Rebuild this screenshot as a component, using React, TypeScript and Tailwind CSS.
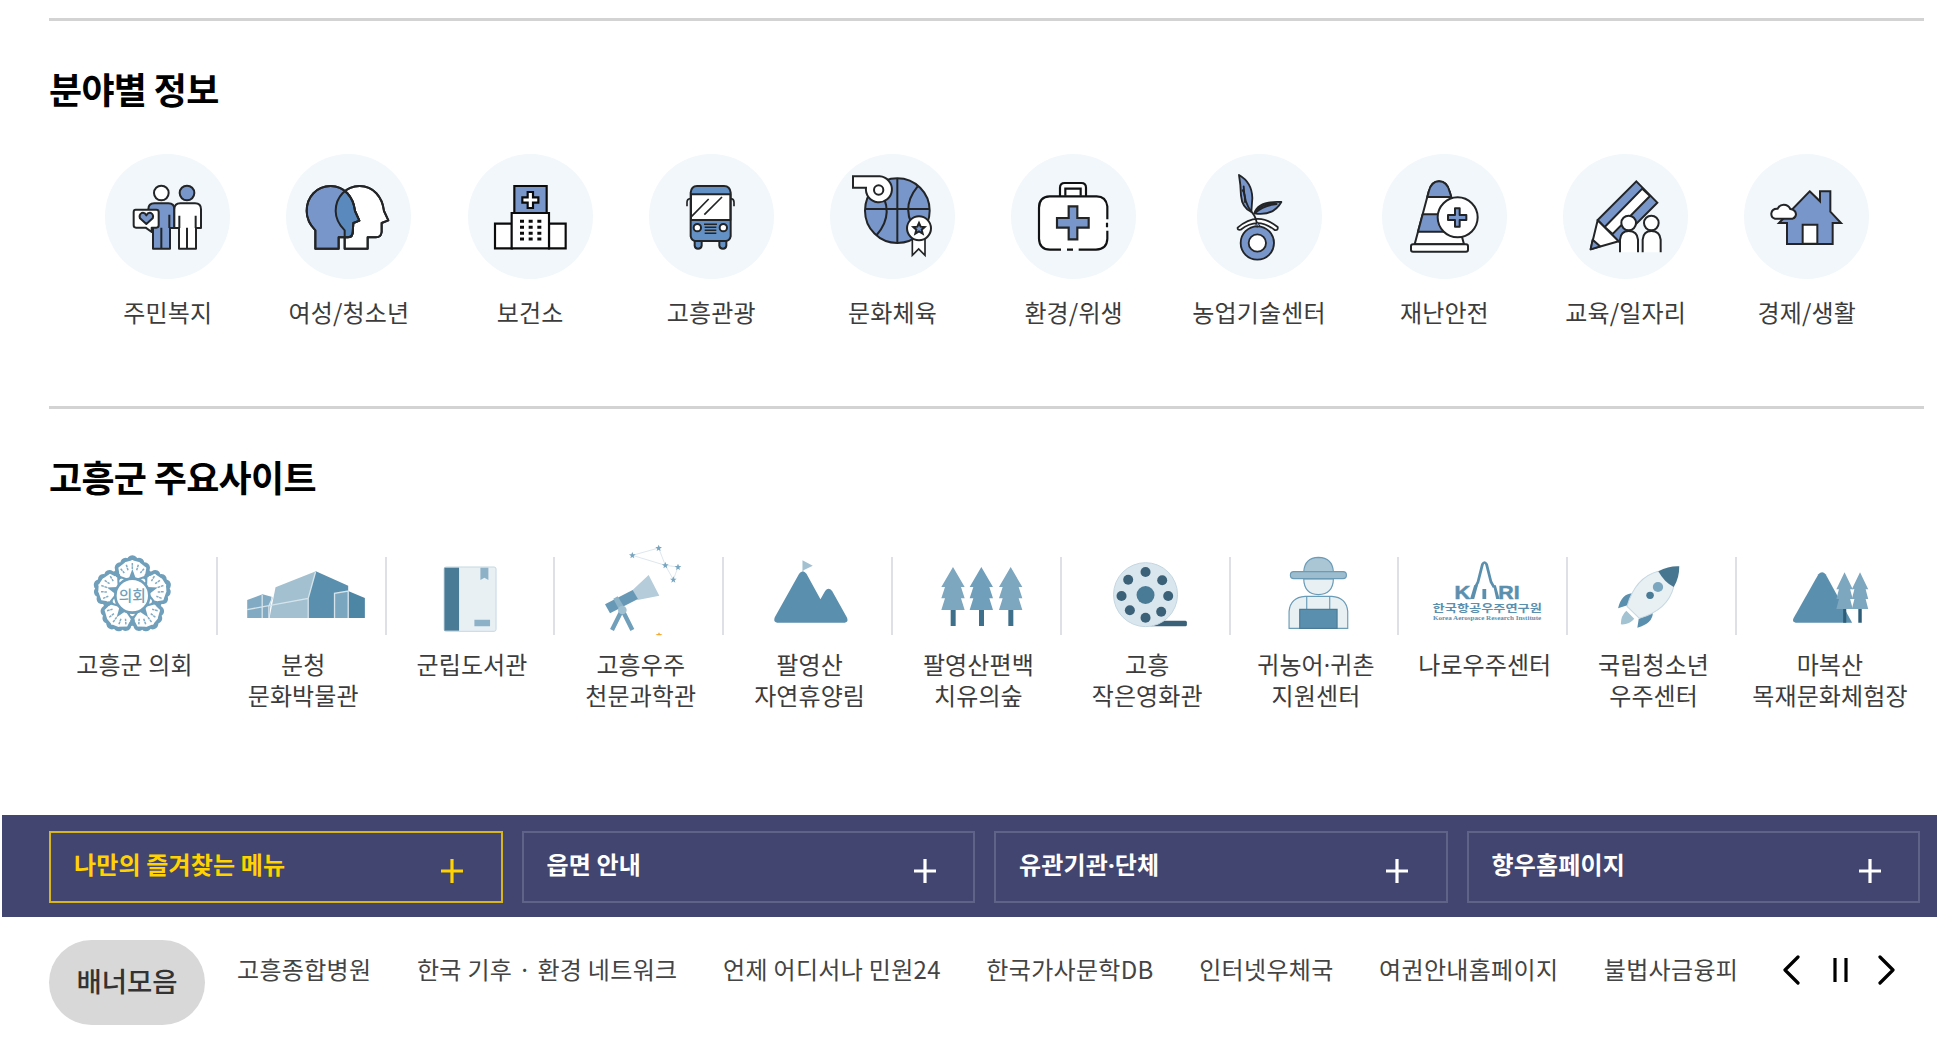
import React from "react";

const BLUE = "#7896ca";
const INK = "#222426";
const TEAL = "#5b8fae";

type Item = {
  label: string;
  viewBox: string;
  icon: React.ReactNode;
};

const headLeft =
  "M948 745V690C930 672 922 652 922 632C922 590 952 557 994 557C1035 557 1062 590 1067 632L1080 661L1062 668L1060 698Q1058 711 1045 711H1018V745Z";
const headRight =
  "M1036 745V690C1016 670 1009 652 1009 632C1009 590 1040 557 1081 557C1122 557 1149 590 1154 632L1167 660L1147 668V695Q1145 711 1130 711H1105V745Z";

const fields: Item[] = [
  {
    label: "주민복지",
    viewBox: "316 461 375 375",
    icon: (
      <g stroke={INK} strokeWidth="6" strokeLinejoin="round">
        <circle cx="485" cy="578" r="22" fill="#fff" />
        <circle cx="562" cy="578" r="22" fill={BLUE} />
        <path d="M446 660V627Q446 609 464 609H506Q524 609 524 627V683H511V745H460V683H446Z" fill={BLUE} />
        <path d="M524 683V627Q524 609 542 609H586Q604 609 604 627V683H589V745H538V683Z" fill="#fff" />
        <path d="M485 682V745M509 643V683M539 646V683M588 646V683M562 682V745" fill="none" />
        <path d="M408 628H470Q477 628 477 635V675Q477 682 470 682H456V695L438 682H409Q402 682 402 675V635Q402 628 408 628Z" fill="#fff" />
        <path d="M440 671L421 654Q417 643 426 638Q435 635 440 645Q445 635 454 638Q463 643 459 654Z" fill={BLUE} />
      </g>
    ),
  },
  {
    label: "여성/청소년",
    viewBox: "860 461 375 375",
    icon: (
      <g stroke={INK} strokeWidth="6" strokeLinejoin="round">
        <clipPath id="head-overlap">
          <path d={headRight} />
        </clipPath>
        <path d={headRight} fill="#fff" />
        <path d={headLeft} fill={BLUE} />
        <path d={headLeft} fill="#5989bd" clipPath="url(#head-overlap)" />
        <path d={headLeft} fill="none" />
        <path d={headRight} fill="none" />
      </g>
    ),
  },
  {
    label: "보건소",
    viewBox: "54 71 375 375",
    icon: (
      <g stroke="#0b0b0c" strokeWidth="6.5">
        <path d="M193 167H290V250H193Z" fill={BLUE} />
        <path d="M135 280H186V354H135ZM297 280H347V354H297Z" fill="#fff" />
        <path d="M185 248H297V354H185Z" fill="#fff" />
        <path d="M233 185H249V201H265V217H249V233H233V217H217V201H233Z" fill="#fff" />
        <path d="M210 273H274M210 291H274M210 309H274M210 326H274" strokeWidth="9" strokeDasharray="12 14" />
      </g>
    ),
  },
  {
    label: "고흥관광",
    viewBox: "598 71 375 375",
    icon: (
      <g stroke={INK} strokeWidth="6" strokeLinejoin="round">
        <path d="M735 330V346Q736 355 745 355Q755 355 756 346V330ZM809 330V346Q810 355 820 355Q829 355 830 346V330Z" fill="#6491c5" />
        <path d="M723 187Q725 167 742 167H823Q841 167 843 187V318Q840 332 828 332H738Q726 332 723 318Z" fill="#6491c5" />
        <path d="M724 192H842V269H724Z" fill="#fff" />
        <path d="M722 205Q712 206 712 216V228M844 205Q853 206 853 216V228M726 258L777 206M764 253L817 200" fill="none" strokeWidth="5" />
        <circle cx="743" cy="292" r="11" fill="#fff" />
        <circle cx="821" cy="292" r="11" fill="#fff" />
        <path d="M763 282H802M765 291H800M765 300H800M765 309H800" strokeWidth="4.5" />
      </g>
    ),
  },
  {
    label: "문화체육",
    viewBox: "1141 71 375 375",
    icon: (
      <g stroke={INK} strokeWidth="6">
        <circle cx="1343" cy="241" r="97" fill={BLUE} />
        <path d="M1343 144V338M1246 236H1440M1404 168Q1345 240 1408 312M1283 168Q1340 246 1281 314" fill="none" />
        <path d="M1210 138H1290A39 39 0 1 1 1249 172H1210Z" fill="#fff" />
        <circle cx="1287" cy="179" r="14" fill="#fff" />
        <path d="M1388 325V375L1407 356L1426 375V325Z" fill="#fff" strokeWidth="5" />
        <circle cx="1408" cy="294" r="36" fill="#fff" />
        <path d="M1408 278L1413 289L1425 290L1416 298L1419 310L1408 303L1397 310L1400 298L1391 290L1403 289Z" fill={BLUE} />
      </g>
    ),
  },
  {
    label: "환경/위생",
    viewBox: "155 71 375 375",
    icon: (
      <g stroke="#111213" strokeWidth="6.5" fill="#fff">
        <rect x="239" y="198" width="205" height="160" rx="34" stroke="none" />
        <path d="M302 197V172Q302 158 316 158H366Q380 158 380 172V197" />
        <path d="M318 196V175H364V196" />
        <path d="M444 267V228Q440 198 412 198H271Q239 200 239 232V325Q240 357 272 358H305M323 358H341M358 358H410Q443 356 444 325V301M443 277V291" fill="none" />
        <path d="M328 228H354V263H388V292H354V327H328V292H293V263H328Z" fill={BLUE} stroke={INK} />
      </g>
    ),
  },
  {
    label: "농업기술센터",
    viewBox: "711 71 375 375",
    icon: (
      <g stroke={INK} strokeWidth="5.5" strokeLinejoin="round" strokeLinecap="round">
        <path d="M833 292Q892 240 953 290Q955 301 944 299Q893 258 842 298Q832 300 833 292Z" fill="#fff" />
        <circle cx="892" cy="338" r="50" fill={BLUE} />
        <circle cx="892" cy="338" r="26" fill="#fff" />
        <path d="M874 245Q846 232 843 196Q842 162 837 134Q876 156 877 203Z" fill={BLUE} />
        <path d="M883 249Q894 211 964 215Q940 258 883 249Z" fill={BLUE} />
        <path d="M851 168Q852 220 876 246Q890 262 892 289M885 248Q910 225 950 221" fill="none" />
        <path d="M848 180Q856 190 855 215M890 240Q912 219 945 219" fill="none" />
        <path d="M886 285L893 276L899 286" fill={BLUE} strokeWidth="3" />
      </g>
    ),
  },
  {
    label: "재난안전",
    viewBox: "-112 71 375 375",
    icon: (
      <g stroke={INK} strokeWidth="6" strokeLinejoin="round">
        <path d="M-14 342L28 184Q36 153 59 153Q83 153 91 184L134 342Z" fill="#fff" />
        <path d="M24 200L28 184Q36 153 59 153Q83 153 91 184L96 200ZM10 252H108L122 304H-4Z" fill={BLUE} />
        <rect x="-25" y="342" width="171" height="22" rx="6" fill="#fff" />
        <circle cx="115" cy="261" r="60" fill="#fff" />
        <path d="M107 234H121V254H141V269H121V289H107V269H86V254H107Z" fill={BLUE} />
      </g>
    ),
  },
  {
    label: "교육/일자리",
    viewBox: "431 71 375 375",
    icon: (
      <g stroke={INK} strokeWidth="6">
        <path d="M651 153L714 217L598 333L535 269Z" fill={BLUE} />
        <path d="M669 175L692 197L580 311L556 290Z" fill="#fff" />
        <path d="M535 270L598 333L514 357Z" fill="#fff" strokeLinejoin="round" />
        <path d="M520 328L542 348L514 357Z" fill={BLUE} strokeLinejoin="round" />
        <path d="M602 366V328Q604 302 628 302Q654 302 656 328V366ZM670 366V328Q672 302 696 302Q722 302 724 328V366Z" fill="#fff" stroke="none" />
        <path d="M602 366V328Q604 302 628 302Q654 302 656 328V366M670 366V328Q672 302 696 302Q722 302 724 328V366" fill="none" />
        <circle cx="628" cy="278" r="22" fill="#fff" />
        <circle cx="696" cy="278" r="22" fill="#fff" />
      </g>
    ),
  },
  {
    label: "경제/생활",
    viewBox: "975 71 375 375",
    icon: (
      <g stroke={INK} strokeWidth="6">
        <path d="M1172 183L1203 213V183H1234V244L1266 278H1241V341H1104V278H1080Z" fill={BLUE} />
        <path d="M1151 283H1195V340H1151Z" fill="#fff" />
        <path d="M1068 265Q1056 262 1057 249Q1059 234 1076 235Q1082 223 1094 223Q1108 223 1114 236Q1130 238 1131 252Q1130 262 1121 265Z" fill="#fff" />
      </g>
    ),
  },
];

const tree = "M0 0L35 60H24L35 94H24L35 129H-35L-24 94H-35L-24 60H-35Z";

const sites: Item[] = [
  {
    label: "고흥군 의회",
    viewBox: "150 450 506.4 300",
    icon: (
      <g transform="translate(397 617)">
        {[0, 72, 144, 216, 288].map(deg => (
          <g key={deg} transform={`rotate(${deg})`}>
            <g fill="#fff" stroke="#6f9fba" strokeWidth="14">
              <path d="M0 -40L-34 -62L-30 -90L0 -100L30 -90L34 -62Z" />
              <circle cx="-37" cy="-67" r="10" />
              <circle cx="37" cy="-67" r="10" />
              <circle cx="-37" cy="-84" r="9" />
              <circle cx="37" cy="-84" r="9" />
              <circle cx="-20" cy="-98" r="9" />
              <circle cx="20" cy="-98" r="9" />
              <circle cx="0" cy="-104" r="10" />
            </g>
            <path d="M0 -46L-38 -60L-42 -84L-20 -101L0 -106L20 -101L42 -84L38 -60Z" fill="#fff" />
            <path
              d="M0 -98V-78M-18 -93L-13 -76M18 -93L13 -76M-35 -81L-24 -68M35 -81L24 -68"
              stroke="#82acc3"
              strokeWidth="4.5"
              strokeDasharray="8 2"
            />
            <path d="M-11 -50L0 -80L11 -50Z" fill="#6f9fba" />
          </g>
        ))}
        <circle r="51" fill="#fff" stroke="#6f9fba" strokeWidth="8" />
        <text y="17" textAnchor="middle" fontSize="44" fontWeight="500" fill="#6f9fba">
          의회
        </text>
      </g>
    ),
  },
  {
    label: "분청\n문화박물관",
    viewBox: "656.4 450 506.4 300",
    icon: (
      <g>
        <path d="M741 630L787 613L814 620L806 684H741Z" fill="#82abc3" />
        <path d="M808 684L826 592L947 544L925 684Z" fill="#a2c0d0" />
        <path d="M947 544L1044 587V684H924V625Z" fill={TEAL} />
        <path d="M1003 610L1044 603V684H1003Z" fill="#7ba6bf" />
        <path d="M1044 603L1094 624V684H1044Z" fill="#4d85a5" />
        <path d="M741 659L924 625L946 546M924 625V684M786 615V684M806 684V648L818 622M1003 684V610L1044 603V684" fill="none" stroke="#d5e3eb" strokeWidth="4" />
      </g>
    ),
  },
  {
    label: "군립도서관",
    viewBox: "1162.8 450 506.4 300",
    icon: (
      <g>
        <rect x="1331" y="531" width="156" height="193" rx="6" fill="#e8f0f4" stroke="#c5d8e2" strokeWidth="3" />
        <path d="M1332 533H1376V722H1332Z" fill="#4a7b96" />
        <path d="M1440 533H1464V570L1452 563L1440 570ZM1422 689H1469V709H1422Z" fill="#8db2c8" />
      </g>
    ),
  },
  {
    label: "고흥우주\n천문과학관",
    viewBox: "169 30 506.4 300",
    icon: (
      <g>
        <path d="M398 76L477 54L497 106ZM497 106L535 111L521 149Z" fill="none" stroke="#d5e2ea" strokeWidth="2.5" />
        {["398 76", "477 54", "497 106", "535 111", "521 149"].map(pos => (
          <path
            key={pos}
            transform={`translate(${pos})`}
            d="M0 -10L3 -3L10 -3L4 2L6 9L0 5L-6 9L-4 2L-10 -3L-3 -3Z"
            fill="#78a5bf"
          />
        ))}
        <path d="M398 181L447 135L479 197L414 210Z" fill="#b5ccda" />
        <path d="M316 223L399 180L415 207L331 250Z" fill="#6799b6" />
        <path d="M341 206L354 199L372 229L357 237Z" fill="#8cb3c8" />
        <path d="M364 246L337 300M371 246L398 300" stroke="#6f9fba" strokeWidth="13" />
        <circle cx="368" cy="240" r="13" fill="#9fc0d1" />
        <path d="M478 307L481 312L488 313L484 316H472L468 313L475 312Z" fill="#f7a92f" />
      </g>
    ),
  },
  {
    label: "팔영산\n자연휴양림",
    viewBox: "675.6 30 506.4 300",
    icon: (
      <g>
        <path d="M908 91L939 107L911 121V130H908Z" fill="#a3c0d1" />
        <path d="M898 131Q909 118 920 131L962 208L976 183Q986 170 997 183L1041 262Q1048 276 1035 278H832Q819 276 825 262Z" fill={TEAL} />
      </g>
    ),
  },
  {
    label: "팔영산편백\n치유의숲",
    viewBox: "-198 30 506.4 300",
    icon: (
      <g>
        {[-21, 64, 152].map((x, i) => (
          <g key={x} transform={`translate(${x} 111)`}>
            <path d="M-7 125H8V177H-7Z" fill="#3f708b" />
            <path d={tree} fill={i === 1 ? "#6f9fba" : "#7da6bf"} />
          </g>
        ))}
      </g>
    ),
  },
  {
    label: "고흥\n작은영화관",
    viewBox: "308.4 30 506.4 300",
    icon: (
      <g>
        <path d="M570 289L600 272H676Q680 272 680 277V284Q680 289 676 289Z" fill="#3a6177" />
        <circle cx="556" cy="194" r="96" fill="#d9e6ed" stroke="#c3d6e1" strokeWidth="3" />
        <circle cx="556" cy="195" r="27" fill="#4a7b96" />
        <g fill="#3a6177">
          <circle cx="556" cy="126" r="15" />
          <circle cx="606" cy="151" r="15" />
          <circle cx="624" cy="198" r="15" />
          <circle cx="603" cy="245" r="15" />
          <circle cx="556" cy="263" r="15" />
          <circle cx="509" cy="241" r="15" />
          <circle cx="484" cy="198" r="15" />
          <circle cx="504" cy="149" r="15" />
        </g>
      </g>
    ),
  },
  {
    label: "귀농어·귀촌\n지원센터",
    viewBox: "814.8 30 506.4 300",
    icon: (
      <g stroke="#6a9bb7" strokeWidth="3.5">
        <path d="M1030 147Q1031 192 1074 194Q1118 192 1119 147Z" fill="#e8f0f4" />
        <path d="M1030 125Q1033 83 1074 82Q1116 83 1119 125Z" fill="#aac5d4" />
        <rect x="990" y="125" width="168" height="21" rx="10" fill="#9dbccd" />
        <path d="M986 295V244Q990 202 1034 199H1114Q1158 202 1162 244V295Z" fill="#e8f0f4" />
        <path d="M1039 199V238M1108 199V238" />
        <path d="M1018 238H1130V295H1018Z" fill={TEAL} stroke="#4a7b96" />
      </g>
    ),
  },
  {
    label: "나로우주센터",
    viewBox: "1.2 30 491 300",
    icon: (
      <g fill={TEAL}>
        <path d="M220 172L228 156L241 103Q247 92 253 103L266 156L275 172" fill="none" stroke={TEAL} strokeWidth="8" />
        <path d="M205 207L217 166H228L217 207ZM272 166H280L291 207H281ZM241 177H252V207H241Z" />
        <g fontFamily="Liberation Sans" fontWeight="700" fontSize="57" stroke={TEAL} strokeWidth="1.5">
          <text x="160" y="207" textLength="46" lengthAdjust="spacingAndGlyphs">
            K
          </text>
          <text x="287" y="207" textLength="62" lengthAdjust="spacingAndGlyphs">
            RI
          </text>
        </g>
        <text x="96" y="245" fontSize="32" fontWeight="700" textLength="318" lengthAdjust="spacingAndGlyphs">
          한국항공우주연구원
        </text>
        <text x="97" y="269" fontSize="17" fontWeight="700" fontFamily="Liberation Serif" textLength="315" lengthAdjust="spacingAndGlyphs">
          Korea Aerospace Research Institute
        </text>
      </g>
    ),
  },
  {
    label: "국립청소년\n우주센터",
    viewBox: "492.2 30 491 300",
    icon: (
      <g>
        <path d="M659 242Q643 256 643 283Q667 285 682 266Z" fill="#a3c2d2" />
        <path d="M679 190Q645 190 635 235L662 226ZM736 247Q737 280 691 293L695 266Z" fill={TEAL} />
        <path d="M661 229Q685 142 752 124L797 170Q780 240 697 265Z" fill="#e8f0f4" stroke="#c5d8e2" strokeWidth="3" />
        <path d="M752 124Q784 107 813 109Q813 145 797 171Q770 158 752 124Z" fill="#477790" />
        <circle cx="751" cy="171" r="15" fill="#7ba6bf" />
        <circle cx="728" cy="196" r="11" fill="#4a7b96" />
      </g>
    ),
  },
  {
    label: "마복산\n목재문화체험장",
    viewBox: "983.2 30 535 300",
    icon: (
      <g>
        <path d="M1217 133Q1228 120 1238 133L1315 278H1151Q1139 276 1145 264Z" fill={TEAL} />
        <path d="M1289 232H1298V278H1289ZM1333 232H1343V278H1333Z" fill="#2f5d78" />
        <g fill="#7da6bf">
          <path d={tree} transform="translate(1293 127) scale(.68 .85)" />
          <path d={tree} transform="translate(1338 127) scale(.68 .85)" />
        </g>
      </g>
    ),
  },
];

const menus = ["나만의 즐겨찾는 메뉴", "읍면 안내", "유관기관·단체", "향우홈페이지"];

const banners = [
  "고흥종합병원",
  "한국 기후 · 환경 네트워크",
  "언제 어디서나 민원24",
  "한국가사문학DB",
  "인터넷우체국",
  "여권안내홈페이지",
  "불법사금융피",
];

// the CJK middle dot is too wide between two words, so use the latin one
function Label({ text }: { text: string }) {
  const [before, after] = text.split("·");
  if (after === undefined) return <>{text}</>;
  return (
    <>
      {before}
      <span className="font-['Noto_Sans',sans-serif] leading-none">·</span>
      {after}
    </>
  );
}

function FieldInfo() {
  return (
    <section className="mr-[15px] ml-[49px] h-[388px] border-t-[3px] border-[#d3d3d3] pt-[47px]">
      <h2 className="text-[36px] leading-[40px] font-bold tracking-[-0.7px] text-black">분야별 정보</h2>
      <ul className="mt-[46px] flex gap-[56.2px] pl-[56.2px]">
        {fields.map(({ label, viewBox, icon }) => (
          <li key={label} className="flex min-w-[125px] shrink-0 flex-col items-center">
            <span className="size-[125px] rounded-full bg-[#f1f7fa]">
              <svg viewBox={viewBox} className="size-full">
                {icon}
              </svg>
            </span>
            <span className="mt-[17px] text-2xl tracking-[0.15px] whitespace-nowrap text-[#3c3c3c]">{label}</span>
          </li>
        ))}
      </ul>
    </section>
  );
}

function MainSites() {
  return (
    <section className="mr-[15px] ml-[49px] h-[409px] border-t-[3px] border-[#d3d3d3] pt-[47px]">
      <h2 className="text-[36px] leading-[40px] font-bold tracking-[-0.7px] text-black">고흥군 주요사이트</h2>
      <ul className="mt-[44px] flex pl-px">
        {sites.map(({ label, viewBox, icon }, i) => (
          <li key={label} className="w-[168.8px] shrink-0 last:w-[184px]">
            <div className="flex h-[100px] items-end">
              <svg viewBox={viewBox} preserveAspectRatio="none" className="h-full min-w-0 flex-1">
                {icon}
              </svg>
              {i < sites.length - 1 && <span className="mr-px mb-[5px] -ml-[3px] h-[78px] w-[2px] bg-[#dfdfe8]" />}
            </div>
            <p className="mt-[8px] text-center text-2xl leading-[31px] tracking-[0.1px] whitespace-pre text-[#3c3c3c]">
              <Label text={label} />
            </p>
          </li>
        ))}
      </ul>
    </section>
  );
}

function QuickMenus() {
  return (
    <nav className="mx-[2px] flex h-[102px] gap-[19px] bg-[#414570] py-[16px] pr-[17px] pl-[47px]">
      {menus.map((menu, i) => (
        <button
          key={menu}
          className={
            i === 0
              ? "flex h-[72px] flex-1 justify-between border-2 border-[#d9b51c] pr-[36.500px] pl-[23px] text-[#ffd200]"
              : "flex h-[72px] flex-1 justify-between border-2 border-[#5f6388] pr-[36.500px] pl-[23px] text-white"
          }
        >
          <span className="mt-[15px] text-2xl font-bold tracking-[0.15px]">
            <Label text={menu} />
          </span>
          <svg viewBox="0 0 24 24" className="mt-[26px] size-6" stroke="currentColor" strokeWidth="3.2">
            <path d="M12 0V24M1 12H23" />
          </svg>
        </button>
      ))}
    </nav>
  );
}

function BannerBar() {
  return (
    <div className="flex pt-[23px] pl-[49px]">
      <strong className="h-[85px] w-[156px] rounded-full bg-[#d8d8d8] text-center text-[27.5px] leading-[81px] font-medium text-[#333]">
        배너모음
      </strong>
      <ul className="mt-[13px] ml-[32px] flex w-[1501px] gap-[45.500px] text-2xl tracking-[0.32px] whitespace-nowrap text-[#444]">
        {banners.map(banner => (
          <li key={banner}>{banner}</li>
        ))}
      </ul>
      <svg
        viewBox="0 0 120 30"
        className="mt-[15px] ml-[40px] h-[30px] w-[120px]"
        fill="none"
        stroke="#000"
        strokeWidth="3.2"
        strokeLinecap="round"
        strokeLinejoin="round"
      >
        <path d="M20 2L7 15L20 28M102 2L115 15L102 28" />
        <path d="M57 3V27M68 3V27" strokeLinecap="butt" />
      </svg>
    </div>
  );
}

function App() {
  return (
    <main className="h-[1047px] w-[1939px] overflow-hidden bg-white pt-[18px] font-['Noto_Sans_CJK_KR',sans-serif]">
      <FieldInfo />
      <MainSites />
      <QuickMenus />
      <BannerBar />
    </main>
  );
}

export default App;
